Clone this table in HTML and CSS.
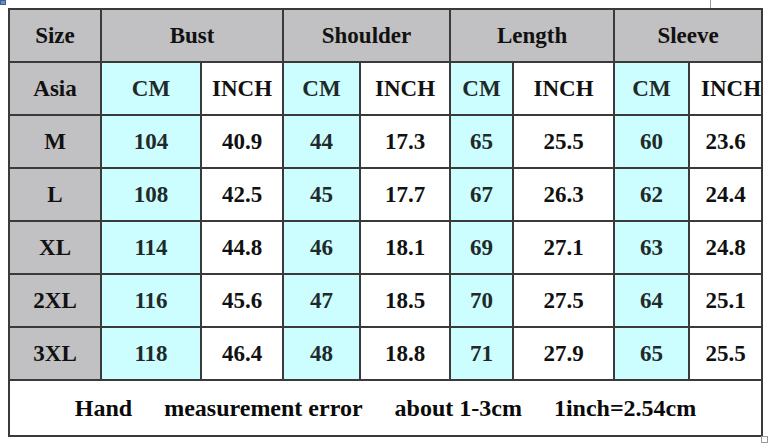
FILE: index.html
```html
<!DOCTYPE html>
<html>
<head>
<meta charset="utf-8">
<link rel="stylesheet" href="styles.css">
</head>
<body>
<div class="page">
  <span class="move-handle"></span>
  <span class="tick"></span>
  <div class="frame">
    <table class="size-table">
      <colgroup>
        <col class="c1"><col class="c2"><col class="c3"><col class="c4"><col class="c5"><col class="c6"><col class="c7"><col class="c8"><col class="c9">
      </colgroup>
      <tr>
        <td class="g">Size</td>
        <td class="g" colspan="2">Bust</td>
        <td class="g" colspan="2">Shoulder</td>
        <td class="g" colspan="2">Length</td>
        <td class="g" colspan="2">Sleeve</td>
      </tr>
      <tr>
        <td class="g">Asia</td>
        <td class="c">CM</td><td>INCH</td>
        <td class="c">CM</td><td>INCH</td>
        <td class="c">CM</td><td>INCH</td>
        <td class="c">CM</td><td class="clip"><div>INCH</div></td>
      </tr>
      <tr>
        <td class="g">M</td>
        <td class="c">104</td><td>40.9</td>
        <td class="c">44</td><td>17.3</td>
        <td class="c">65</td><td>25.5</td>
        <td class="c">60</td><td>23.6</td>
      </tr>
      <tr>
        <td class="g">L</td>
        <td class="c">108</td><td>42.5</td>
        <td class="c">45</td><td>17.7</td>
        <td class="c">67</td><td>26.3</td>
        <td class="c">62</td><td>24.4</td>
      </tr>
      <tr>
        <td class="g">XL</td>
        <td class="c">114</td><td>44.8</td>
        <td class="c">46</td><td>18.1</td>
        <td class="c">69</td><td>27.1</td>
        <td class="c">63</td><td>24.8</td>
      </tr>
      <tr>
        <td class="g">2XL</td>
        <td class="c">116</td><td>45.6</td>
        <td class="c">47</td><td>18.5</td>
        <td class="c">70</td><td>27.5</td>
        <td class="c">64</td><td>25.1</td>
      </tr>
      <tr>
        <td class="g">3XL</td>
        <td class="c">118</td><td>46.4</td>
        <td class="c">48</td><td>18.8</td>
        <td class="c">71</td><td>27.9</td>
        <td class="c">65</td><td>25.5</td>
      </tr>
      <tr class="foot">
        <td colspan="9">
          <div class="note">
            <span>Hand</span>
            <span>measurement error</span>
            <span>about 1-3cm</span>
            <span>1inch=2.54cm</span>
          </div>
        </td>
      </tr>
    </table>
    <span class="resize-handle"></span>
  </div>
</div>
</body>
</html>
```

FILE: styles.css
```css
html, body {
  margin: 0;
  padding: 0;
  background: #ffffff;
}

.page {
  position: relative;
  width: 770px;
  height: 444px;
  padding: 8px 0 0 8px;
  box-sizing: border-box;
  font-family: "Liberation Serif", "DejaVu Serif", serif;
  font-weight: bold;
  color: #111111;
}

.move-handle {
  position: absolute;
  left: 0;
  top: 0;
  width: 6px;
  height: 5px;
  background: #6d8fbf;
  border: 1px solid #3f5f95;
  box-sizing: border-box;
}

.tick {
  position: absolute;
  left: 710px;
  top: 0;
  width: 1px;
  height: 8px;
  background: #9a9a9a;
}

.frame {
  position: relative;
  width: 755px;
}

.size-table {
  border-collapse: collapse;
  table-layout: fixed;
  width: 755px;
  font-family: "Liberation Serif", "DejaVu Serif", serif;
  font-size: 23px;
  font-weight: bold;
}

.c1 { width: 92px; }
.c2 { width: 100px; }
.c3 { width: 82px; }
.c4 { width: 77px; }
.c5 { width: 90px; }
.c6 { width: 63px; }
.c7 { width: 101px; }
.c8 { width: 75px; }
.c9 { width: 73px; }

.size-table td {
  border: 2px solid #3a3a3a;
  height: 51px;
  padding: 0;
  text-align: center;
  vertical-align: middle;
  background: #ffffff;
  white-space: nowrap;
  font-family: "Liberation Serif", "DejaVu Serif", serif;
}

.size-table td.g {
  background: #c1c0c2;
}

.size-table td.c {
  background: #ccfdff;
  color: #1f2a2a;
}

.size-table td.clip div {
  overflow: hidden;
  text-align: left;
  padding-left: 11px;
}

.size-table tr.foot td {
  height: 54px;
  font-size: 24px;
}

.note {
  display: flex;
  justify-content: center;
  gap: 32px;
  color: #0a0a0a;
}

.resize-handle {
  position: absolute;
  right: -5px;
  bottom: -6px;
  width: 5px;
  height: 5px;
  border: 1px solid #9a9a9a;
  background: #ffffff;
}
```
